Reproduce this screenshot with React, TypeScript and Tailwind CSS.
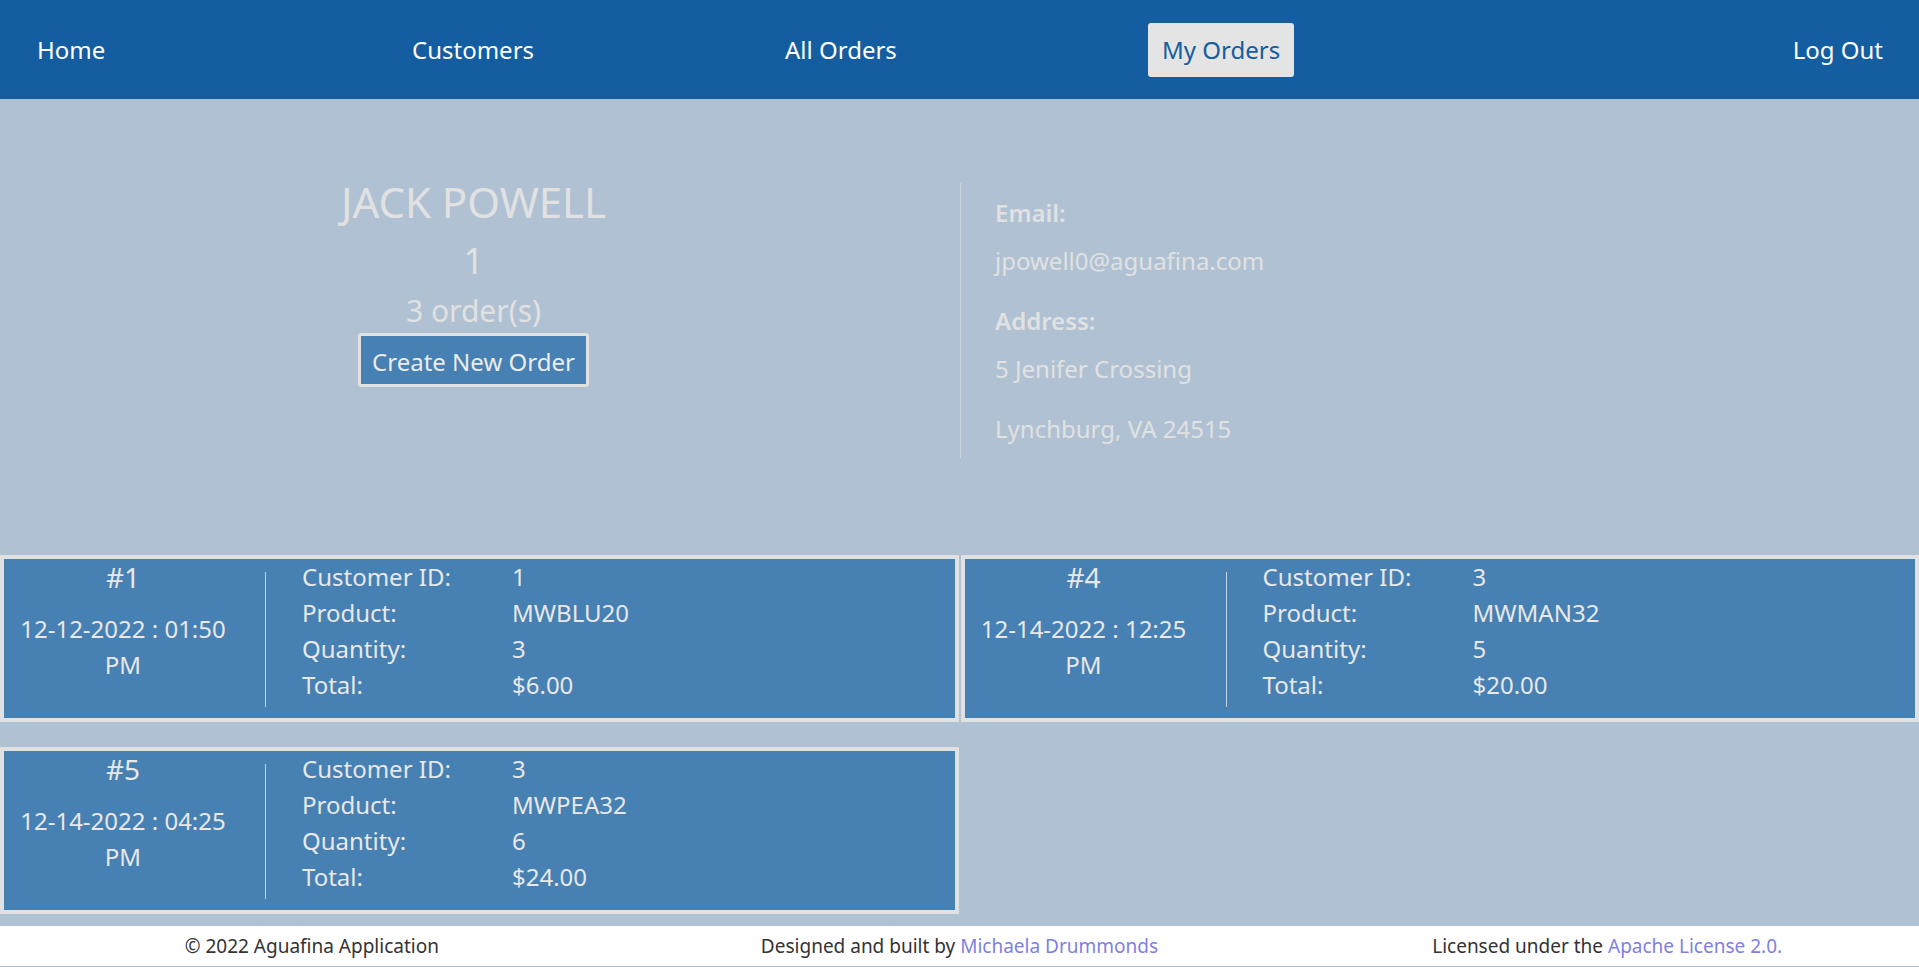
import React from "react";

type Order = {
  id: number;
  date: string;
  customerId: number;
  product: string;
  quantity: number;
  total: string;
};

const orders: Order[] = [
  { id: 1, date: "12-12-2022 : 01:50 PM", customerId: 1, product: "MWBLU20", quantity: 3, total: "$6.00" },
  { id: 4, date: "12-14-2022 : 12:25 PM", customerId: 3, product: "MWMAN32", quantity: 5, total: "$20.00" },
  { id: 5, date: "12-14-2022 : 04:25 PM", customerId: 3, product: "MWPEA32", quantity: 6, total: "$24.00" },
];

function OrderCard({ o }: { o: Order }) {
  return (
    <div className="flex w-[calc(50%-1px)] border-4 border-[#e1e1e1] bg-[#4780b2] text-[#e8e8e8]">
      <div className="w-[238px] shrink-0 text-center">
        <div className="mb-[16px] text-[28px] leading-[36px]">#{o.id}</div>
        <div className="text-[24px] leading-[36px]">{o.date}</div>
      </div>
      <div className="ml-[23px] mb-[11px] mt-[13px] w-px shrink-0 bg-[#c3d2e1]" />
      <div className="ml-[36px] grid grid-cols-[210px_auto] pb-[15px] text-[24px] leading-[36px]">
        <div>Customer ID:</div>
        <div>{o.customerId}</div>
        <div>Product:</div>
        <div>{o.product}</div>
        <div>Quantity:</div>
        <div>{o.quantity}</div>
        <div>Total:</div>
        <div>{o.total}</div>
      </div>
    </div>
  );
}

export default function App() {
  return (
    <div className="min-h-[967px] w-full font-['Noto_Sans','Open_Sans',sans-serif] bg-[#b0c1d4]">
      {/* Nav */}
      <nav className="flex h-[99px] items-center bg-[#135da0] pl-[23px] pr-[22px] text-[24px] leading-[36px] text-white">
        <div className="w-[375px]">
          <a className="px-[14px] py-[9px]">Home</a>
        </div>
        <div className="w-[373px]">
          <a className="px-[14px] py-[9px]">Customers</a>
        </div>
        <div className="w-[377px]">
          <a className="px-[14px] py-[9px]">All Orders</a>
        </div>
        <div>
          <a className="block rounded-[3px] bg-[#e4e4e4] px-[14px] py-[9px] text-[#135da0]">My Orders</a>
        </div>
        <div className="ml-auto">
          <a className="px-[14px] py-[9px]">Log Out</a>
        </div>
      </nav>

      {/* Profile */}
      <section className="flex pb-[85px] pt-[84px] text-[#e1e1e1]">
        <div className="flex w-[960px] shrink-0 flex-col items-center pr-[13px]">
          <h1 className="text-[42px] leading-[38px]">JACK POWELL</h1>
          <div className="mt-[18px] text-[36px] leading-[44px]">1</div>
          <div className="mt-[10px] text-[30px] leading-[36px]">3 order(s)</div>
          <button className="mt-[4px] rounded-[3px] border-[3px] border-[#e1e1e1] bg-[#4780b2] px-[11px] pb-[4px] pt-[8px] text-[24px] leading-[36px] text-[#ececec]">
            Create New Order
          </button>
        </div>
        <div className="flex-1 border-l border-[#ccd6e1] pb-[11px] pl-[34px] pt-[12px] text-[24px] leading-[36px]">
          <div className="mb-[12px] font-semibold">Email:</div>
          <div className="mb-[24px]">jpowell0@aguafina.com</div>
          <div className="mb-[12px] font-semibold">Address:</div>
          <div className="mb-[24px]">5 Jenifer Crossing</div>
          <div>Lynchburg, VA 24515</div>
        </div>
      </section>

      {/* Orders */}
      <section className="flex flex-wrap justify-between gap-y-[25px] pb-[12px] pt-[12px]">
        {orders.map((o) => (
          <OrderCard key={o.id} o={o} />
        ))}
      </section>

      {/* Footer */}
      <footer className="grid h-[40px] grid-cols-3 items-center gap-x-6 bg-white pt-[1px] text-center text-[19px] text-[#333333]">
        <div>© 2022 Aguafina Application</div>
        <div>
          Designed and built by <a className="text-[#7f7fe3]">Michaela Drummonds</a>
        </div>
        <div>
          Licensed under the <a className="text-[#7f7fe3]">Apache License 2.0.</a>
        </div>
      </footer>
    </div>
  );
}
